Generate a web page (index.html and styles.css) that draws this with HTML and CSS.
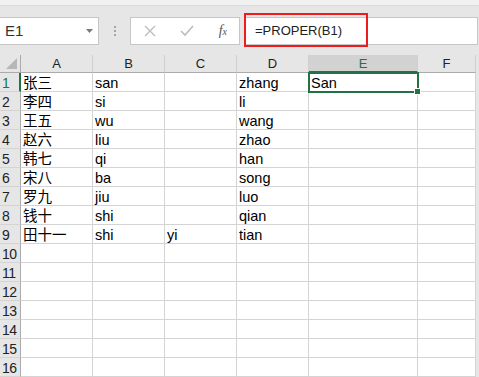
FILE: index.html
```html
<!DOCTYPE html>
<html>
<head>
<meta charset="utf-8">
<link rel="stylesheet" href="styles.css">
</head>
<body>

<div class="topstrip"></div>

<div class="fbar">
  <div class="namebox">
    <span>E1</span>
    <svg class="drop" width="7" height="4" viewBox="0 0 7 4"><path d="M0 0h7L3.5 4z" fill="#7a7a7a"/></svg>
  </div>
  <div class="grip"><i></i><i></i><i></i></div>
  <div class="btns">
    <svg width="12" height="12" viewBox="0 0 12 12"><path d="M1 1l10 10M11 1L1 11" stroke="#bdbdbd" stroke-width="1.4" fill="none"/></svg>
    <svg width="14" height="12" viewBox="0 0 14 12"><path d="M1 6l4 4 8-9" stroke="#bdbdbd" stroke-width="1.6" fill="none"/></svg>
    <span class="fx">f<sub>x</sub></span>
  </div>
  <div class="input">
    <span>=PROPER(B1)</span>
    <div class="mark"></div>
  </div>
</div>

<div class="sheet" id="sheet"></div>

<script>
const cols = ['A', 'B', 'C', 'D', 'E', 'F'];
const rows = [
  ['张三', 'san', '', 'zhang', 'San', ''],
  ['李四', 'si', '', 'li', '', ''],
  ['王五', 'wu', '', 'wang', '', ''],
  ['赵六', 'liu', '', 'zhao', '', ''],
  ['韩七', 'qi', '', 'han', '', ''],
  ['宋八', 'ba', '', 'song', '', ''],
  ['罗九', 'jiu', '', 'luo', '', ''],
  ['钱十', 'shi', '', 'qian', '', ''],
  ['田十一', 'shi', 'yi', 'tian', '', '']
];

const sheet = document.querySelector('#sheet');
let html = '<div class="corner"><span></span></div>';

cols.forEach(c => {
  html += `<div class="colhead${c === 'E' ? ' sel' : ''}">${c}</div>`;
});
html += '<div class="edge"></div>';

for (let r = 0; r < 16; r++) {
  const data = rows[r] || ['', '', '', '', '', ''];
  html += `<div class="rowhead${r === 0 ? ' sel' : ''}">${r + 1}</div>`;
  data.forEach((v, i) => {
    const active = (r === 0 && i === 4) ? ' active' : '';
    html += `<div class="cell${active}">${v}${active ? '<b></b>' : ''}</div>`;
  });
  html += '<div class="edge"></div>';
}

sheet.innerHTML = html;
</script>

</body>
</html>
```

FILE: styles.css
```css
body {
    margin: 0;
    width: 479px;
    height: 377px;
    overflow: hidden;
    background: #e6e6e6;
    font-family: 'Liberation Sans', 'Noto Sans CJK SC', sans-serif;
}

.topstrip {
    height: 5px;
    background: #f1f1f1;
    border-bottom: 1px solid #dadada;
}

.fbar {
    display: flex;
    align-items: center;
    height: 49px;
}

.namebox, .btns, .input {
    box-sizing: border-box;
    height: 28px;
    background: #fff;
    border: 1px solid #c6c6c6;
}

.namebox {
    width: 99px;
    border-left: none;
    display: flex;
    align-items: center;
    justify-content: space-between;
    padding: 0 5px 0 5px;
    font-size: 15px;
    color: #333;
}

.grip {
    width: 31px;
    display: flex;
    flex-direction: column;
    align-items: center;
    gap: 2px;
}

.grip i {
    width: 2px;
    height: 2px;
    background: #a6a6a6;
}

.btns {
    width: 110px;
    display: flex;
    align-items: center;
    justify-content: space-between;
    padding: 0 12px 0 13px;
}

.fx {
    font-family: 'Liberation Serif', serif;
    font-style: italic;
    font-size: 14px;
    color: #555;
}

.fx sub {
    font-size: 10px;
    vertical-align: 0;
}

.input {
    position: relative;
    margin-left: 4px;
    width: 234px;
    display: flex;
    align-items: center;
    padding-left: 10px;
    font-size: 13px;
    color: #222;
}

.mark {
    position: absolute;
    left: -1px;
    top: -5px;
    width: 120px;
    height: 30px;
    border: 2px solid #ee1c1c;
}

.sheet {
    display: grid;
    grid-template-columns: 21px 72px 72px 72px 72px 109px 58px 3px;
    grid-template-rows: 18px;
    grid-auto-rows: 19px;
}

.sheet > div {
    box-sizing: border-box;
}

.corner {
    position: relative;
    border-right: 1px solid #ababab;
    border-bottom: 1px solid #ababab;
}

.corner span {
    position: absolute;
    right: 3px;
    bottom: 3px;
    width: 0;
    height: 0;
    border-left: 11px solid transparent;
    border-bottom: 11px solid #b7b7b7;
}

.colhead {
    text-align: center;
    font-size: 13px;
    line-height: 17px;
    color: #222;
    border-right: 1px solid #d0d0d0;
    border-bottom: 1px solid #ababab;
}

.colhead.sel {
    background: #d2d2d2;
    color: #217346;
    border-bottom: 2px solid #217346;
}

.rowhead {
    font-size: 14px;
    letter-spacing: -0.5px;
    line-height: 21px;
    padding-left: 2px;
    color: #222;
    border-right: 1px solid #ababab;
    border-bottom: 1px solid #d4d4d4;
}

.rowhead.sel {
    color: #217346;
    border-right: 2px solid #217346;
}

.cell {
    position: relative;
    background: #fff;
    font-size: 14.5px;
    line-height: 21px;
    padding-left: 2px;
    white-space: nowrap;
    color: #000;
    border-right: 1px solid #d4d4d4;
    border-bottom: 1px solid #d4d4d4;
}

.cell.active {
    outline: 2px solid #217346;
    outline-offset: -1px;
    z-index: 1;
}

.cell.active b {
    position: absolute;
    right: -4px;
    bottom: -4px;
    width: 5px;
    height: 5px;
    background: #217346;
    border: 1px solid #fff;
}

.edge {
    background: #e6e6e6;
}
```
